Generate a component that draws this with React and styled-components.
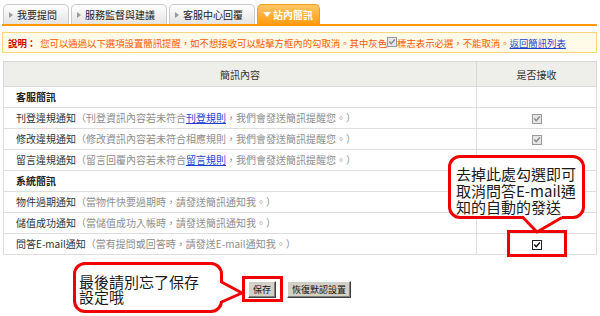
import React from "react";
import styled, { createGlobalStyle } from "styled-components";

const GlobalStyle = createGlobalStyle`
  body {
    margin: 0;
    background: #fff;
    font-family: "Noto Sans CJK TC", "Noto Sans CJK SC", sans-serif;
  }
`;

const Page = styled.div`
  position: relative;
  width: 600px;
  height: 316px;
  padding: 4px 3px 0 2px;
  box-sizing: border-box;
  font-size: 10px;
  color: #333;
`;

const TabBar = styled.div`
  display: flex;
  gap: 2px;
  padding-left: 1px;
  height: 20px;
  border-bottom: 2px solid #ff9a00;
`;

const Tab = styled.div`
  display: flex;
  align-items: center;
  gap: ${(p) => (p.$active ? "2px" : "4px")};
  height: 20px;
  box-sizing: border-box;
  padding: ${(p) => (p.$active ? "0 6px 0 5px" : "0 11px 0 5px")};
  border: 1px solid ${(p) => (p.$active ? "#f59a20" : "#cacaca")};
  border-bottom: none;
  border-radius: 5px 5px 0 0;
  background: ${(p) =>
    p.$active
      ? "linear-gradient(#ffc665, #ff9c14)"
      : "linear-gradient(#ffffff, #e4e4e4)"};
  color: ${(p) => (p.$active ? "#fff" : "#222")};
  font-weight: ${(p) => (p.$active ? "bold" : "normal")};
  white-space: nowrap;
`;

const Arrow = styled.span`
  width: 0;
  height: 0;
  border-left: 4px solid #9a9a9a;
  border-top: 3.5px solid transparent;
  border-bottom: 3.5px solid transparent;
`;

const ArrowDown = styled.span`
  width: 0;
  height: 0;
  border-top: 5px solid #fff;
  border-left: 4px solid transparent;
  border-right: 4px solid transparent;
`;

const Notice = styled.div`
  display: flex;
  align-items: center;
  margin-top: 6px;
  height: 21px;
  box-sizing: border-box;
  padding-left: 5px;
  border: 1px solid #f8d57e;
  background: #fffbe8;
  color: #ff5a00;
  font-size: 9.4px;
  white-space: nowrap;
`;

const NoticeLabel = styled.b`
  color: #d40000;
  margin-right: 4px;
`;

const Link = styled.a`
  color: #1c3fcf;
  text-decoration: underline;
  cursor: pointer;
`;

const Table = styled.table`
  width: 594px;
  margin: 8px 0 0 1px;
  border-collapse: collapse;
  border: 1px solid #d2d2d2;
`;

const Th = styled.th`
  height: 24px;
  padding: 0;
  background: #eeeeea;
  border: 1px solid #d8d8d8;
  font-weight: normal;
  color: #333;
  width: ${(p) => p.$width || "auto"};
`;

const Td = styled.td`
  height: 20px;
  padding: ${(p) => (p.$center ? "0" : "0 0 0 12px")};
  border: 1px solid #dedede;
  text-align: ${(p) => (p.$center ? "center" : "left")};
  font-weight: ${(p) => (p.$bold ? "bold" : "normal")};
  color: ${(p) => (p.$bold ? "#222" : "#333")};
  line-height: 10px;
`;

const Hint = styled.span`
  color: #8e8e8e;
`;

const Check = styled.svg`
  display: inline-block;
  vertical-align: middle;
  margin: ${(p) => p.$margin || "0"};
`;

const CheckIcon = ({ locked, margin }) => (
  <Check width="10" height="10" viewBox="0 0 10 10" $margin={margin}>
    <rect
      x="0.5"
      y="0.5"
      width="9"
      height="9"
      fill={locked ? "#e6e6e6" : "#fff"}
      stroke={locked ? "#9a9a9a" : "#222"}
    />
    <path
      d="M2.3 4.6 L4.2 6.7 L7.8 2.6"
      fill="none"
      stroke={locked ? "#8a8a8a" : "#111"}
      strokeWidth="1.5"
    />
  </Check>
);

const Actions = styled.div`
  display: flex;
  justify-content: center;
  gap: 11px;
  margin-top: 26px;
`;

const Button = styled.button`
  height: 17px;
  padding: 0 4px;
  font-family: inherit;
  font-size: 9px;
  line-height: 13px;
  color: #111;
  background: #d4d0c8;
  border: 1px solid;
  border-color: #fff #404040 #404040 #fff;
  box-shadow: inset -1px -1px #808080;
  cursor: pointer;
`;

const Mark = styled.div`
  position: absolute;
  left: ${(p) => p.$left}px;
  top: ${(p) => p.$top}px;
  width: ${(p) => p.$width}px;
  height: ${(p) => p.$height}px;
  box-sizing: border-box;
  border: 3px solid #f00000;
`;

const Callout = styled.div`
  position: absolute;
  left: ${(p) => p.$left}px;
  top: ${(p) => p.$top}px;
  width: ${(p) => p.$width}px;
  height: ${(p) => p.$height}px;
`;

const Bubble = styled.div`
  width: 100%;
  height: 100%;
  box-sizing: border-box;
  border: 3px solid #f00000;
  border-radius: 12px;
  background: #fff;
  padding: ${(p) => p.$pad};
  font-size: 15px;
  line-height: ${(p) => p.$lh}px;
  color: #1a1a1a;
  white-space: nowrap;
`;

const Tail = styled.svg`
  position: absolute;
  left: ${(p) => p.$left}px;
  top: ${(p) => p.$top}px;
  overflow: visible;
`;

const rules = [
  { name: "刊登違規通知", pre: "刊登資訊內容若未符合", link: "刊登規則", post: "，我們會發送簡訊提醒您。" },
  { name: "修改違規通知", pre: "修改資訊內容若未符合相應規則，我們會發送簡訊提醒您。" },
  { name: "留言違規通知", pre: "留言回覆內容若未符合", link: "留言規則", post: "，我們會發送簡訊提醒您。" },
];

const system = [
  { name: "物件過期通知", pre: "當物件快要過期時，請發送簡訊通知我。" },
  { name: "儲值成功通知", pre: "當儲值成功入帳時，請發送簡訊通知我。" },
  { name: "問答E-mail通知", pre: "當有提問或回答時，請發送E-mail通知我。", check: true },
];

const Row = ({ item, locked }) => (
  <tr>
    <Td>
      {item.name}
      <Hint>
        （{item.pre}
        {item.link && <Link>{item.link}</Link>}
        {item.post}）
      </Hint>
    </Td>
    <Td $center>
      {locked && <CheckIcon locked />}
      {item.check && <CheckIcon />}
    </Td>
  </tr>
);

export default function App() {
  return (
    <Page>
      <GlobalStyle />
      <TabBar>
        <Tab><Arrow />我要提問</Tab>
        <Tab><Arrow />服務監督與建議</Tab>
        <Tab><Arrow />客服中心回覆</Tab>
        <Tab $active><ArrowDown />站內簡訊</Tab>
      </TabBar>

      <Notice>
        <NoticeLabel>說明：</NoticeLabel>
        您可以通過以下選項設置簡訊提醒，如不想接收可以點擊方框內的勾取消。其中灰色
        <CheckIcon locked margin="0 0 2px" />
        標志表示必選，不能取消。
        <Link>返回簡訊列表</Link>
      </Notice>

      <Table>
        <thead>
          <tr>
            <Th>簡訊內容</Th>
            <Th $width="119px">是否接收</Th>
          </tr>
        </thead>
        <tbody>
          <tr>
            <Td $bold>客服簡訊</Td>
            <Td $center />
          </tr>
          <Row item={rules[0]} locked />
          <Row item={rules[1]} locked />
          <Row item={rules[2]} />
          <tr>
            <Td $bold>系統簡訊</Td>
            <Td $center />
          </tr>
          {system.map((s) => (
            <Row key={s.name} item={s} />
          ))}
        </tbody>
      </Table>

      <Actions>
        <Button>保存</Button>
        <Button>恢復默認設置</Button>
      </Actions>

      <Mark $left={507} $top={230} $width={60} $height={27} />
      <Mark $left={242} $top={276} $width={41} $height={26} />

      <Callout $left={448} $top={155} $width={137} $height={64}>
        <Bubble $pad="8px 5px 0" $lh={16.5}>
          去掉此處勾選即可
          <br />
          取消問答E-mail通
          <br />
          知的自動的發送
        </Bubble>
        <Tail $left={72} $top={59} width="46" height="20">
          <rect x="4" y="1.5" width="38" height="4" fill="#fff" />
          <polyline
            points="3,3.5 17,18 42,3.5"
            fill="none"
            stroke="#f00000"
            strokeWidth="3"
            strokeLinejoin="round"
          />
        </Tail>
      </Callout>

      <Callout $left={73} $top={262} $width={150} $height={51}>
        <Bubble $pad="9px 3px" $lh={15}>
          最後請別忘了保存
          <br />
          設定哦
        </Bubble>
        <Tail $left={145} $top={17} width="26" height="26">
          <rect x="1.5" y="4" width="4" height="18" fill="#fff" />
          <polyline
            points="3.5,3 24,14 3.5,23"
            fill="none"
            stroke="#f00000"
            strokeWidth="3"
            strokeLinejoin="round"
          />
        </Tail>
      </Callout>
    </Page>
  );
}
